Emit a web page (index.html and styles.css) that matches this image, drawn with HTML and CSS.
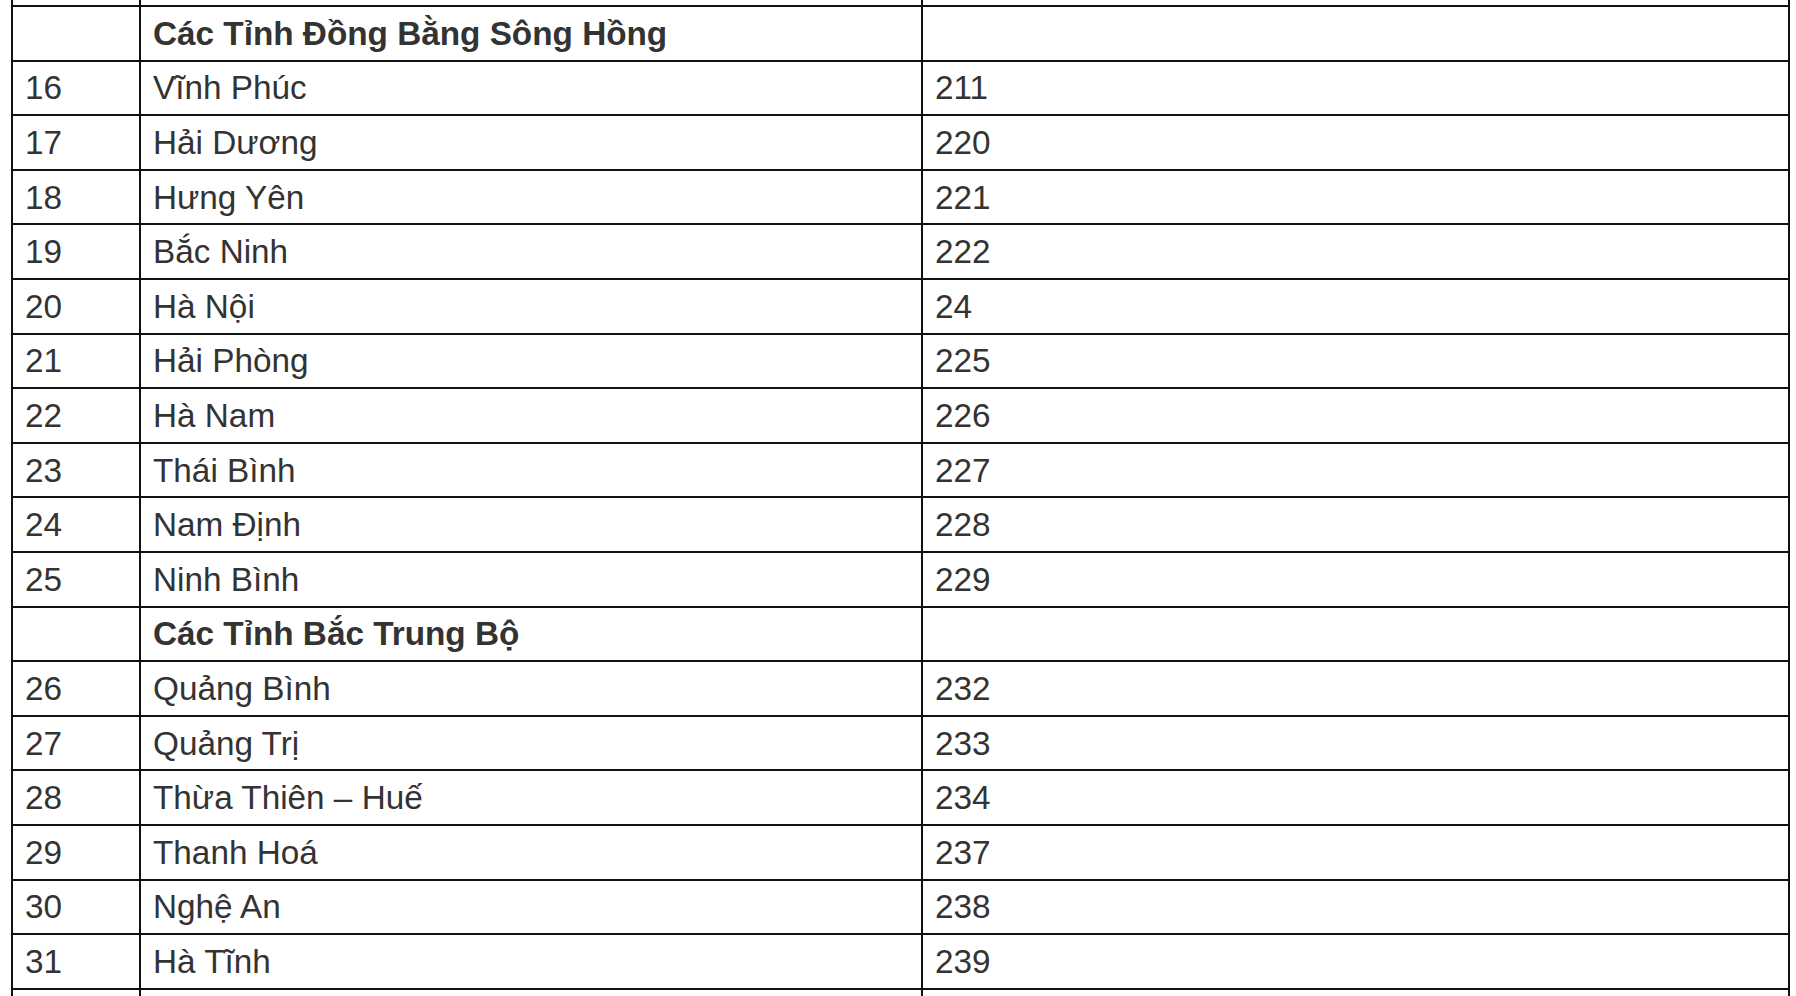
FILE: index.html
```html
<!DOCTYPE html>
<html lang="vi">
<head>
<meta charset="utf-8">
<title>Mã vùng</title>
<link rel="stylesheet" href="styles.css">
</head>
<body>
<div class="sheet">
  <div class="cell"></div><div class="cell"></div><div class="cell"></div>
  <div class="cell"></div><div class="cell bold">Các Tỉnh Đồng Bằng Sông Hồng</div><div class="cell"></div>
  <div class="cell">16</div><div class="cell">Vĩnh Phúc</div><div class="cell">211</div>
  <div class="cell">17</div><div class="cell">Hải Dương</div><div class="cell">220</div>
  <div class="cell">18</div><div class="cell">Hưng Yên</div><div class="cell">221</div>
  <div class="cell">19</div><div class="cell">Bắc Ninh</div><div class="cell">222</div>
  <div class="cell">20</div><div class="cell">Hà Nội</div><div class="cell">24</div>
  <div class="cell">21</div><div class="cell">Hải Phòng</div><div class="cell">225</div>
  <div class="cell">22</div><div class="cell">Hà Nam</div><div class="cell">226</div>
  <div class="cell">23</div><div class="cell">Thái Bình</div><div class="cell">227</div>
  <div class="cell">24</div><div class="cell">Nam Định</div><div class="cell">228</div>
  <div class="cell">25</div><div class="cell">Ninh Bình</div><div class="cell">229</div>
  <div class="cell"></div><div class="cell bold">Các Tỉnh Bắc Trung Bộ</div><div class="cell"></div>
  <div class="cell">26</div><div class="cell">Quảng Bình</div><div class="cell">232</div>
  <div class="cell">27</div><div class="cell">Quảng Trị</div><div class="cell">233</div>
  <div class="cell">28</div><div class="cell">Thừa Thiên – Huế</div><div class="cell">234</div>
  <div class="cell">29</div><div class="cell">Thanh Hoá</div><div class="cell">237</div>
  <div class="cell">30</div><div class="cell">Nghệ An</div><div class="cell">238</div>
  <div class="cell">31</div><div class="cell">Hà Tĩnh</div><div class="cell">239</div>
  <div class="cell"></div><div class="cell"></div><div class="cell"></div>
</div>
</body>
</html>
```

FILE: styles.css
```css
html, body {
  margin: 0;
  padding: 0;
  background: #ffffff;
  overflow: hidden;
}

body {
  font-family: "Liberation Sans", Arial, sans-serif;
  font-size: 33.3px;
  color: #333333;
}

.sheet {
  display: grid;
  grid-template-columns: 128px 782px 867px;
  grid-auto-rows: 54.6px;
  width: max-content;
  margin: -49.6px 0 0 11px;
  border-left: 2px solid #111111;
  border-top: 2px solid #111111;
}

.cell {
  box-sizing: border-box;
  border-right: 2px solid #111111;
  border-bottom: 2px solid #111111;
  padding: 1px 12px 0;
  display: flex;
  align-items: center;
  white-space: nowrap;
}

.bold {
  font-weight: bold;
}
```
